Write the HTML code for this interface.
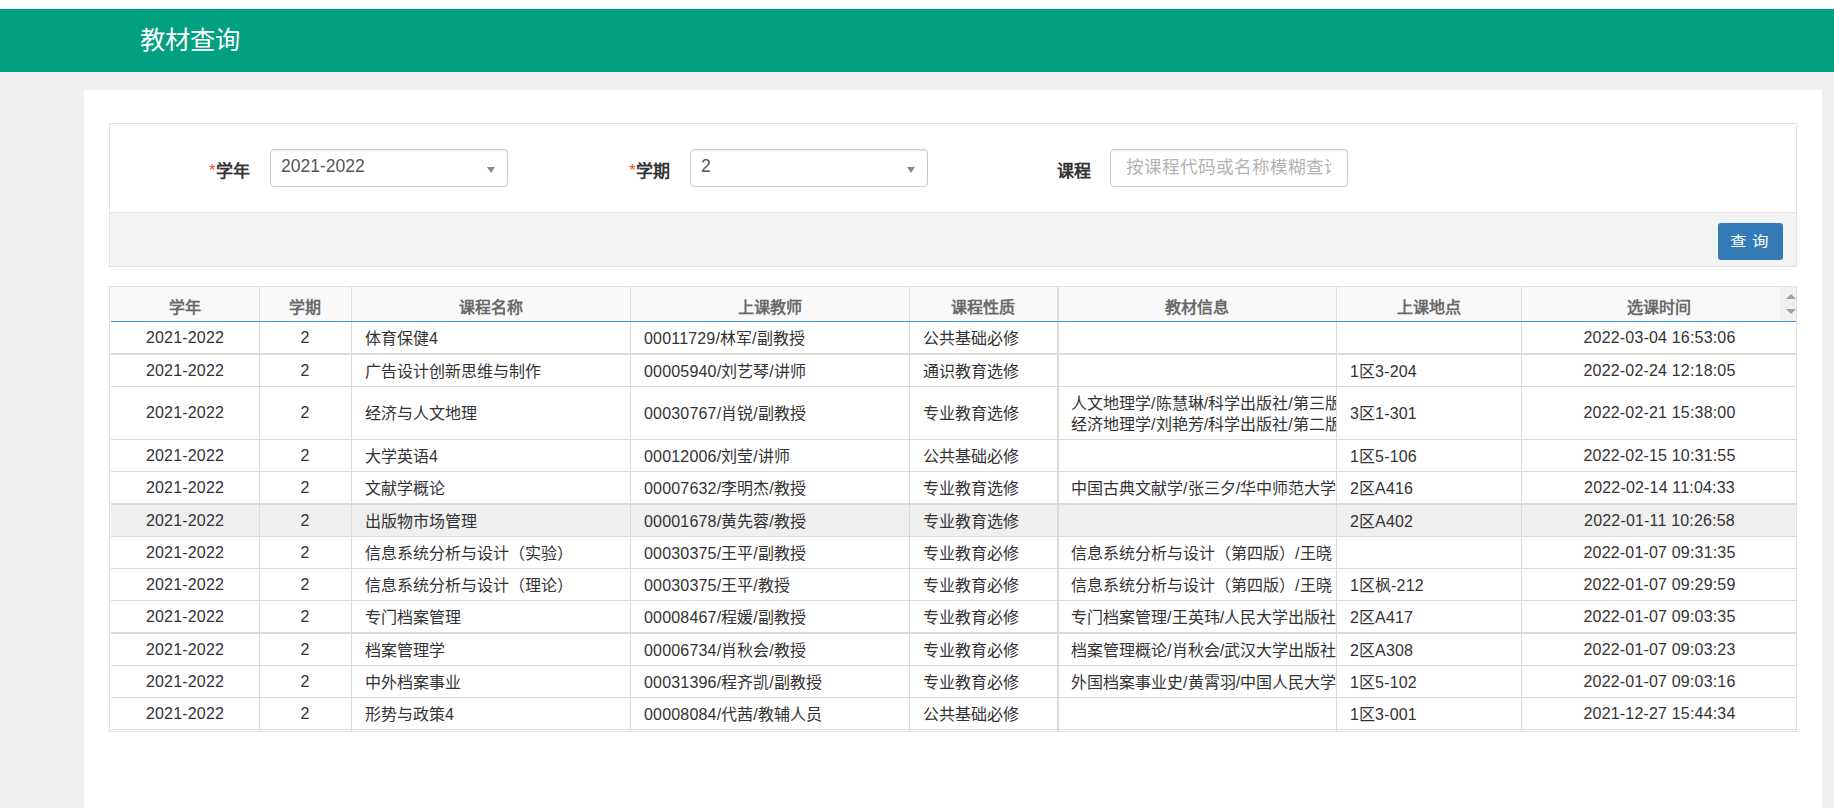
<!DOCTYPE html>
<html lang="zh-CN">
<head>
<meta charset="utf-8">
<style>
html,body{margin:0;padding:0;}
body{width:1834px;height:808px;overflow:hidden;position:relative;background:#f0f0f0;font-family:"Liberation Sans",sans-serif;}
.a{position:absolute;}
#topw{left:0;top:0;width:1834px;height:9px;background:#fff;}
#bar{left:0;top:9px;width:1834px;height:63px;background:#00a081;}
#title{left:140px;top:24px;font-size:25.3px;line-height:32px;color:#fff;white-space:nowrap;}
#panel{left:84px;top:90px;width:1738px;height:718px;background:#fff;}
#fbox{left:109px;top:123px;width:1686px;height:142px;border:1px solid #e3e3e3;background:#fff;}
#fbot{left:110px;top:212px;width:1686px;height:53px;background:#f3f3f3;border-top:1px solid #e3e3e3;}
.lbl{font-size:17px;font-weight:bold;color:#333;white-space:nowrap;line-height:20px;}
.lbl b{color:#e5552f;font-weight:normal;position:relative;top:-1px;}
.sel{height:36px;border:1px solid #cccccc;border-radius:4px;background:#fff;box-shadow:inset 0 1px 1px rgba(0,0,0,.075);}
.selt{font-size:17.5px;color:#555;line-height:20px;white-space:nowrap;}
.arr{width:0;height:0;border-left:4.5px solid transparent;border-right:4.5px solid transparent;border-top:6px solid #888;}
#btn{left:1718px;top:223px;width:65px;height:37px;background:#337ab7;border-radius:3px;color:#fff;font-size:16px;line-height:37px;text-align:center;}
.hl{height:1px;background:#dcdcd4;}
.vl{width:1px;background:#dcdcd4;}
.c i{font-style:normal;letter-spacing:0;}
.c{font-size:16px;color:#333;white-space:nowrap;line-height:20px;letter-spacing:.18px;}
.h{font-size:16px;color:#6a6a6a;font-weight:bold;white-space:nowrap;line-height:20px;}
</style>
</head>
<body>
<div class="a" id="topw"></div>
<div class="a" id="bar"></div>
<div class="a" id="title">教材查询</div>
<div class="a" id="panel"></div>
<div class="a" id="fbox"></div>
<div class="a" id="fbot"></div>

<div class="a lbl" style="left:209px;top:162px;"><b>*</b>学年</div>
<div class="a sel" style="left:270px;top:149px;width:236px;"></div>
<div class="a selt" style="left:281px;top:156px;">2021-2022</div>
<div class="a arr" style="left:486.5px;top:166.5px;"></div>

<div class="a lbl" style="left:629px;top:162px;"><b>*</b>学期</div>
<div class="a sel" style="left:690px;top:149px;width:236px;"></div>
<div class="a selt" style="left:701px;top:156px;">2</div>
<div class="a arr" style="left:906.5px;top:166.5px;"></div>

<div class="a lbl" style="left:1057px;top:162px;">课程</div>
<div class="a sel" style="left:1110px;top:149px;width:236px;"></div>
<div class="a" style="left:1126px;top:155px;width:205px;overflow:hidden;font-size:17.6px;line-height:24px;color:#b3b3b3;white-space:nowrap;">按课程代码或名称模糊查询</div>

<div class="a" id="btn"></div>
<div class="a" style="left:1730px;top:231px;font-size:16.5px;line-height:20px;color:#fff;transform:scaleY(.86);">查</div>
<div class="a" style="left:1752px;top:231px;font-size:16.5px;line-height:20px;color:#fff;transform:scaleY(.86);">询</div>

<!-- TABLE -->
<div id="grid">
<div class="a" style="left:109px;top:286px;width:1686px;height:444px;border:1px solid #e0e0e0;background:#fff;"></div>
<div class="a" style="left:111px;top:287px;width:1685px;height:34px;background:#f9f9f9;"></div>
<div class="a" style="left:1780px;top:287px;width:16px;height:34px;background:#f0f0f0;"></div>
<div class="a" style="left:111px;top:505px;width:1685px;height:31px;background:#efefef;"></div>
<div class="a" style="left:111px;top:321px;width:1685px;height:1px;background:#3a95da;"></div>
<div class="a vl" style="left:259px;top:287px;height:34px;width:1px;background:#dfdfdf;"></div>
<div class="a vl" style="left:259px;top:322px;height:409px;width:1px;"></div>
<div class="a vl" style="left:351px;top:287px;height:34px;width:1px;background:#dfdfdf;"></div>
<div class="a vl" style="left:351px;top:322px;height:409px;width:1px;"></div>
<div class="a vl" style="left:630px;top:287px;height:34px;width:1px;background:#dfdfdf;"></div>
<div class="a vl" style="left:630px;top:322px;height:409px;width:1px;"></div>
<div class="a vl" style="left:909px;top:287px;height:34px;width:1px;background:#dfdfdf;"></div>
<div class="a vl" style="left:909px;top:322px;height:409px;width:1px;"></div>
<div class="a vl" style="left:1057px;top:287px;height:34px;width:2px;background:#dfdfdf;"></div>
<div class="a vl" style="left:1057px;top:322px;height:409px;width:2px;"></div>
<div class="a vl" style="left:1336px;top:287px;height:34px;width:1px;background:#dfdfdf;"></div>
<div class="a vl" style="left:1336px;top:322px;height:409px;width:1px;"></div>
<div class="a vl" style="left:1521px;top:287px;height:34px;width:1px;background:#dfdfdf;"></div>
<div class="a vl" style="left:1521px;top:322px;height:409px;width:1px;"></div>
<div class="a hl" style="left:111px;top:353px;width:1685px;height:2px;"></div>
<div class="a hl" style="left:111px;top:386px;width:1685px;height:1px;"></div>
<div class="a hl" style="left:111px;top:439px;width:1685px;height:1px;"></div>
<div class="a hl" style="left:111px;top:471px;width:1685px;height:1px;"></div>
<div class="a hl" style="left:111px;top:503px;width:1685px;height:2px;"></div>
<div class="a hl" style="left:111px;top:536px;width:1685px;height:1px;"></div>
<div class="a hl" style="left:111px;top:568px;width:1685px;height:1px;"></div>
<div class="a hl" style="left:111px;top:600px;width:1685px;height:1px;"></div>
<div class="a hl" style="left:111px;top:632px;width:1685px;height:2px;"></div>
<div class="a hl" style="left:111px;top:665px;width:1685px;height:1px;"></div>
<div class="a hl" style="left:111px;top:697px;width:1685px;height:1px;"></div>
<div class="a hl" style="left:111px;top:729px;width:1685px;height:1px;"></div>
<div class="a h" style="left:111px;top:298px;width:148px;text-align:center;">学年</div>
<div class="a h" style="left:259px;top:298px;width:92px;text-align:center;">学期</div>
<div class="a h" style="left:351px;top:298px;width:279px;text-align:center;">课程名称</div>
<div class="a h" style="left:630px;top:298px;width:279px;text-align:center;">上课教师</div>
<div class="a h" style="left:909px;top:298px;width:148px;text-align:center;">课程性质</div>
<div class="a h" style="left:1057px;top:298px;width:279px;text-align:center;">教材信息</div>
<div class="a h" style="left:1336px;top:298px;width:185px;text-align:center;">上课地点</div>
<div class="a h" style="left:1521px;top:298px;width:275px;text-align:center;">选课时间</div>
<div class="a c" style="left:111px;top:328.0px;width:148px;text-align:center;">2021-2022</div>
<div class="a c" style="left:259px;top:328.0px;width:92px;text-align:center;">2</div>
<div class="a c" style="left:365px;top:329.0px;"><i>体育保健</i>4</div>
<div class="a c" style="left:644px;top:329.0px;">00011729/<i>林军</i>/<i>副教授</i></div>
<div class="a c" style="left:923px;top:329.0px;"><i>公共基础必修</i></div>
<div class="a c" style="left:1522px;top:328.0px;width:275px;text-align:center;">2022-03-04 16:53:06</div>
<div class="a c" style="left:111px;top:361.0px;width:148px;text-align:center;">2021-2022</div>
<div class="a c" style="left:259px;top:361.0px;width:92px;text-align:center;">2</div>
<div class="a c" style="left:365px;top:362.0px;"><i>广告设计创新思维与制作</i></div>
<div class="a c" style="left:644px;top:362.0px;">00005940/<i>刘艺琴</i>/<i>讲师</i></div>
<div class="a c" style="left:923px;top:362.0px;"><i>通识教育选修</i></div>
<div class="a c" style="left:1350px;top:362.0px;">1<i>区</i>3-204</div>
<div class="a c" style="left:1522px;top:361.0px;width:275px;text-align:center;">2022-02-24 12:18:05</div>
<div class="a c" style="left:111px;top:403.0px;width:148px;text-align:center;">2021-2022</div>
<div class="a c" style="left:259px;top:403.0px;width:92px;text-align:center;">2</div>
<div class="a c" style="left:365px;top:404.0px;"><i>经济与人文地理</i></div>
<div class="a c" style="left:644px;top:404.0px;">00030767/<i>肖锐</i>/<i>副教授</i></div>
<div class="a c" style="left:923px;top:404.0px;"><i>专业教育选修</i></div>
<div class="a c" style="left:1071px;top:393.0px;width:265px;overflow:hidden;line-height:21px;"><i>人文地理学</i>/<i>陈慧琳</i>/<i>科学出版社</i>/<i>第三版</i><br><i>经济地理学</i>/<i>刘艳芳</i>/<i>科学出版社</i>/<i>第二版</i></div>
<div class="a c" style="left:1350px;top:404.0px;">3<i>区</i>1-301</div>
<div class="a c" style="left:1522px;top:403.0px;width:275px;text-align:center;">2022-02-21 15:38:00</div>
<div class="a c" style="left:111px;top:446.0px;width:148px;text-align:center;">2021-2022</div>
<div class="a c" style="left:259px;top:446.0px;width:92px;text-align:center;">2</div>
<div class="a c" style="left:365px;top:447.0px;"><i>大学英语</i>4</div>
<div class="a c" style="left:644px;top:447.0px;">00012006/<i>刘莹</i>/<i>讲师</i></div>
<div class="a c" style="left:923px;top:447.0px;"><i>公共基础必修</i></div>
<div class="a c" style="left:1350px;top:447.0px;">1<i>区</i>5-106</div>
<div class="a c" style="left:1522px;top:446.0px;width:275px;text-align:center;">2022-02-15 10:31:55</div>
<div class="a c" style="left:111px;top:478.0px;width:148px;text-align:center;">2021-2022</div>
<div class="a c" style="left:259px;top:478.0px;width:92px;text-align:center;">2</div>
<div class="a c" style="left:365px;top:479.0px;"><i>文献学概论</i></div>
<div class="a c" style="left:644px;top:479.0px;">00007632/<i>李明杰</i>/<i>教授</i></div>
<div class="a c" style="left:923px;top:479.0px;"><i>专业教育选修</i></div>
<div class="a c" style="left:1071px;top:478.0px;width:265px;overflow:hidden;line-height:21px;"><i>中国古典文献学</i>/<i>张三夕</i>/<i>华中师范大学出版社</i></div>
<div class="a c" style="left:1350px;top:479.0px;">2<i>区</i>A416</div>
<div class="a c" style="left:1522px;top:478.0px;width:275px;text-align:center;">2022-02-14 11:04:33</div>
<div class="a c" style="left:111px;top:511.0px;width:148px;text-align:center;">2021-2022</div>
<div class="a c" style="left:259px;top:511.0px;width:92px;text-align:center;">2</div>
<div class="a c" style="left:365px;top:512.0px;"><i>出版物市场管理</i></div>
<div class="a c" style="left:644px;top:512.0px;">00001678/<i>黄先蓉</i>/<i>教授</i></div>
<div class="a c" style="left:923px;top:512.0px;"><i>专业教育选修</i></div>
<div class="a c" style="left:1350px;top:512.0px;">2<i>区</i>A402</div>
<div class="a c" style="left:1522px;top:511.0px;width:275px;text-align:center;">2022-01-11 10:26:58</div>
<div class="a c" style="left:111px;top:543.0px;width:148px;text-align:center;">2021-2022</div>
<div class="a c" style="left:259px;top:543.0px;width:92px;text-align:center;">2</div>
<div class="a c" style="left:365px;top:544.0px;"><i>信息系统分析与设计（实验）</i></div>
<div class="a c" style="left:644px;top:544.0px;">00030375/<i>王平</i>/<i>副教授</i></div>
<div class="a c" style="left:923px;top:544.0px;"><i>专业教育必修</i></div>
<div class="a c" style="left:1071px;top:543.0px;width:265px;overflow:hidden;line-height:21px;"><i>信息系统分析与设计（第四版）</i>/<i>王晓</i></div>
<div class="a c" style="left:1522px;top:543.0px;width:275px;text-align:center;">2022-01-07 09:31:35</div>
<div class="a c" style="left:111px;top:575.0px;width:148px;text-align:center;">2021-2022</div>
<div class="a c" style="left:259px;top:575.0px;width:92px;text-align:center;">2</div>
<div class="a c" style="left:365px;top:576.0px;"><i>信息系统分析与设计（理论）</i></div>
<div class="a c" style="left:644px;top:576.0px;">00030375/<i>王平</i>/<i>教授</i></div>
<div class="a c" style="left:923px;top:576.0px;"><i>专业教育必修</i></div>
<div class="a c" style="left:1071px;top:575.0px;width:265px;overflow:hidden;line-height:21px;"><i>信息系统分析与设计（第四版）</i>/<i>王晓</i></div>
<div class="a c" style="left:1350px;top:576.0px;">1<i>区枫</i>-212</div>
<div class="a c" style="left:1522px;top:575.0px;width:275px;text-align:center;">2022-01-07 09:29:59</div>
<div class="a c" style="left:111px;top:607.0px;width:148px;text-align:center;">2021-2022</div>
<div class="a c" style="left:259px;top:607.0px;width:92px;text-align:center;">2</div>
<div class="a c" style="left:365px;top:608.0px;"><i>专门档案管理</i></div>
<div class="a c" style="left:644px;top:608.0px;">00008467/<i>程媛</i>/<i>副教授</i></div>
<div class="a c" style="left:923px;top:608.0px;"><i>专业教育必修</i></div>
<div class="a c" style="left:1071px;top:607.0px;width:265px;overflow:hidden;line-height:21px;"><i>专门档案管理</i>/<i>王英玮</i>/<i>人民大学出版社</i></div>
<div class="a c" style="left:1350px;top:608.0px;">2<i>区</i>A417</div>
<div class="a c" style="left:1522px;top:607.0px;width:275px;text-align:center;">2022-01-07 09:03:35</div>
<div class="a c" style="left:111px;top:640.0px;width:148px;text-align:center;">2021-2022</div>
<div class="a c" style="left:259px;top:640.0px;width:92px;text-align:center;">2</div>
<div class="a c" style="left:365px;top:641.0px;"><i>档案管理学</i></div>
<div class="a c" style="left:644px;top:641.0px;">00006734/<i>肖秋会</i>/<i>教授</i></div>
<div class="a c" style="left:923px;top:641.0px;"><i>专业教育必修</i></div>
<div class="a c" style="left:1071px;top:640.0px;width:265px;overflow:hidden;line-height:21px;"><i>档案管理概论</i>/<i>肖秋会</i>/<i>武汉大学出版社</i></div>
<div class="a c" style="left:1350px;top:641.0px;">2<i>区</i>A308</div>
<div class="a c" style="left:1522px;top:640.0px;width:275px;text-align:center;">2022-01-07 09:03:23</div>
<div class="a c" style="left:111px;top:672.0px;width:148px;text-align:center;">2021-2022</div>
<div class="a c" style="left:259px;top:672.0px;width:92px;text-align:center;">2</div>
<div class="a c" style="left:365px;top:673.0px;"><i>中外档案事业</i></div>
<div class="a c" style="left:644px;top:673.0px;">00031396/<i>程齐凯</i>/<i>副教授</i></div>
<div class="a c" style="left:923px;top:673.0px;"><i>专业教育必修</i></div>
<div class="a c" style="left:1071px;top:672.0px;width:265px;overflow:hidden;line-height:21px;"><i>外国档案事业史</i>/<i>黄霄羽</i>/<i>中国人民大学出版社</i></div>
<div class="a c" style="left:1350px;top:673.0px;">1<i>区</i>5-102</div>
<div class="a c" style="left:1522px;top:672.0px;width:275px;text-align:center;">2022-01-07 09:03:16</div>
<div class="a c" style="left:111px;top:704.0px;width:148px;text-align:center;">2021-2022</div>
<div class="a c" style="left:259px;top:704.0px;width:92px;text-align:center;">2</div>
<div class="a c" style="left:365px;top:705.0px;"><i>形势与政策</i>4</div>
<div class="a c" style="left:644px;top:705.0px;">00008084/<i>代茜</i>/<i>教辅人员</i></div>
<div class="a c" style="left:923px;top:705.0px;"><i>公共基础必修</i></div>
<div class="a c" style="left:1350px;top:705.0px;">1<i>区</i>3-001</div>
<div class="a c" style="left:1522px;top:704.0px;width:275px;text-align:center;">2021-12-27 15:44:34</div>
<div class="a" style="left:1786px;top:294px;width:0;height:0;border-left:5px solid transparent;border-right:5px solid transparent;border-bottom:5px solid #a0a0a0;"></div>
<div class="a" style="left:1786px;top:309px;width:0;height:0;border-left:5px solid transparent;border-right:5px solid transparent;border-top:5px solid #a0a0a0;"></div>
</div>
</body>
</html>
